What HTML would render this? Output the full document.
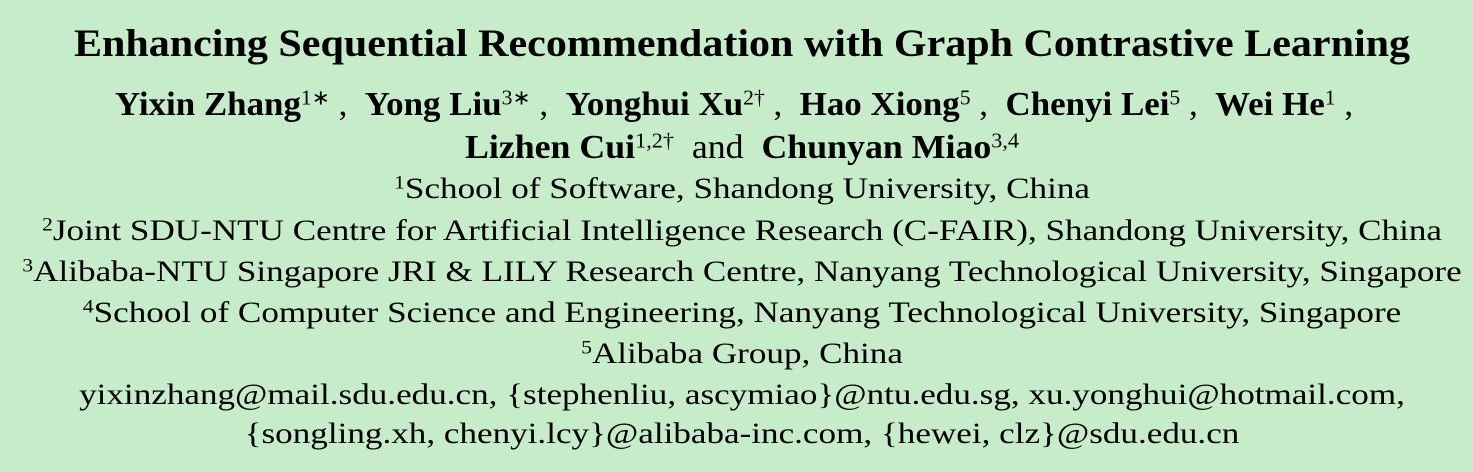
<!DOCTYPE html>
<html><head><meta charset="utf-8"><style>
body{margin:0;width:1473px;height:472px;background:#c6ecca;overflow:hidden;font-family:"Liberation Serif",serif;color:#000}
.l{position:absolute;left:0;width:1484px;text-align:center;white-space:nowrap;transform-origin:742px 0}
.t{font-size:39px;line-height:39px;font-weight:bold;transform:scaleX(1.078)}
.a{font-size:34px;line-height:34px;font-weight:bold}
.a span{font-weight:normal}
.f{font-size:30px;line-height:30px;transform:scaleX(1.17)}
sup{font-size:0.62em;vertical-align:0.5em;line-height:0;font-weight:normal}
</style></head><body>
<div class="l t" style="top:24px">Enhancing Sequential Recommendation with Graph Contrastive Learning</div>
<div class="l a" style="top:88px;transform:scaleX(1.027);left:-8px">Yixin Zhang<sup>1∗</sup><span> ,&nbsp; </span>Yong Liu<sup>3∗</sup><span> ,&nbsp; </span>Yonghui Xu<sup>2†</sup><span> ,&nbsp; </span>Hao Xiong<sup>5</sup><span> ,&nbsp; </span>Chenyi Lei<sup>5</sup><span> ,&nbsp; </span>Wei He<sup>1</sup><span> ,</span></div>
<div class="l a" style="top:131px;transform:scaleX(1.053)">Lizhen Cui<sup>1,2†</sup><span>&nbsp; and&nbsp; </span>Chunyan Miao<sup>3,4</sup></div>
<div class="l f" style="top:174px"><sup>1</sup>School of Software, Shandong University, China</div>
<div class="l f" style="top:216px"><sup>2</sup>Joint SDU-NTU Centre for Artificial Intelligence Research (C-FAIR), Shandong University, China</div>
<div class="l f" style="top:257px"><sup>3</sup>Alibaba-NTU Singapore JRI &amp; LILY Research Centre, Nanyang Technological University, Singapore</div>
<div class="l f" style="top:298px"><sup>4</sup>School of Computer Science and Engineering, Nanyang Technological University, Singapore</div>
<div class="l f" style="top:339px"><sup>5</sup>Alibaba Group, China</div>
<div class="l f" style="top:380px">yixinzhang@mail.sdu.edu.cn, {stephenliu, ascymiao}@ntu.edu.sg, xu.yonghui@hotmail.com,</div>
<div class="l f" style="top:419px">{songling.xh, chenyi.lcy}@alibaba-inc.com, {hewei, clz}@sdu.edu.cn</div>
</body></html>
